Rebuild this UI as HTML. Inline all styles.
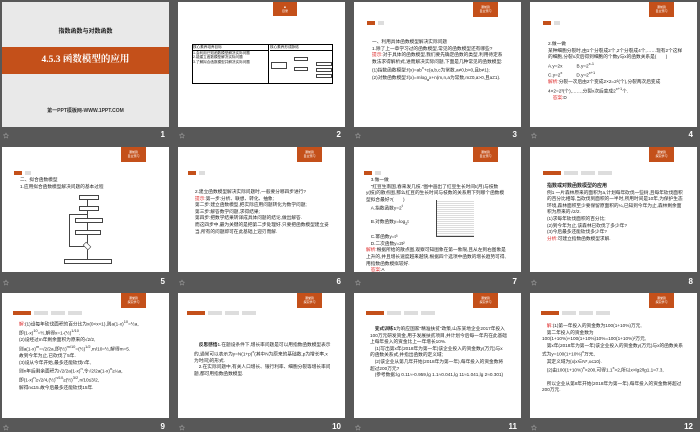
<!DOCTYPE html>
<html><head><meta charset="utf-8"><style>
*{margin:0;padding:0;box-sizing:border-box}
body{width:700px;height:431px;background:#585858;position:relative;overflow:hidden;font-family:"Liberation Sans","Noto Sans CJK SC",sans-serif}
.s{position:absolute;width:167px;height:125px;background:#fff;overflow:hidden;color:#222;font-size:4.7px;line-height:6.6px}
.tab{position:absolute;left:119px;top:0;width:25px;height:15px;background:#c4501a;color:#fff;font-size:3px;line-height:4px;text-align:center;padding-top:3px}
.nav{position:absolute;left:13px;top:24px;height:4px;display:flex;gap:3px}
.nav i{display:block;height:4px;width:14px;background:#ddd}
.nav i:first-child{background:#c4501a;width:18px}
.nav2 i{width:6px}.nav2 i:first-child{width:8px}
.t{position:absolute;left:18px;right:14px}
.r{color:#d22}
.lb{position:absolute;color:#ddd;font-size:6px}
.n{position:absolute;color:#fff;font-size:8px;font-weight:bold;width:20px;text-align:right}
.b{position:absolute;border:1px solid #444}
</style></head><body>

<!-- row 1 -->
<div class="s" style="left:2px;top:2px;background:#e9e9e9">
 <div style="position:absolute;top:27px;width:100%;text-align:center;font-size:6px;font-weight:bold;color:#222">指数函数与对数函数</div>
 <div style="position:absolute;top:45px;width:100%;height:27px;background:#c4501a;color:#fff;text-align:center;font-size:9.5px;font-weight:bold;line-height:27px;font-family:'Liberation Serif','Noto Serif CJK SC',serif">4.5.3 函数模型的应用</div>
 <div style="position:absolute;top:106px;width:100%;text-align:center;font-size:5px;font-weight:bold;color:#333">第一PPT模板网-WWW.1PPT.COM</div>
</div>
<div class="s" style="left:178px;top:2px">
 <div class="tab" style="left:95px;width:24px;height:14px">■<br>目录</div>
 <div style="position:absolute;left:14px;top:42px;width:141px;height:40px;border:1px solid #000;font-size:3.6px;line-height:4.6px">
  <div style="position:absolute;left:0;top:0;width:76px;height:38px;border-right:1px solid #000"><div style="border-bottom:1px solid #000">核心素养培养目标</div>1.会利用已知函数模型解决实际问题<br>2.能建立函数模型解决实际问题<br>3.了解拟合函数模型并解决实际问题</div>
  <div style="position:absolute;left:77px;top:0;right:0;border-bottom:1px solid #000">核心素养形成脉络</div>
  <div class="b" style="left:78px;top:17px;width:16px;height:7px"></div>
  <div class="b" style="left:101px;top:12px;width:14px;height:4px"></div>
  <div class="b" style="left:101px;top:22px;width:14px;height:4px"></div>
  <div class="b" style="left:123px;top:17px;width:16px;height:4px"></div>
  <div class="b" style="left:123px;top:23px;width:16px;height:4px"></div>
  <div class="b" style="left:123px;top:29px;width:16px;height:4px"></div>
 </div>
</div>
<div class="s" style="left:354px;top:2px">
 <div class="tab">课前篇<br>自主预习</div>
 <div class="nav nav2" style="top:19px"><i></i><i></i></div>
 <div class="t" style="top:37px">一、利用具体函数模型解决实际问题<br>1.除了上一章学习过的函数模型,常见的函数模型还有哪些?<br><span class="r">提示:</span>对于具体的函数模型,我们要先确定函数的类型,利用待定系数法求得解析式,进而解决实际问题,下面是几种常见的函数模型:<br>(1)指数函数模型:f(x)=ab<sup>x</sup>+c(a,b,c为常数,a≠0,b&gt;0,且b≠1);<br>(2)对数函数模型:f(x)=mlog<sub>a</sub>x+n(m,n,a为常数,m≠0,a&gt;0,且a≠1).</div>
</div>
<div class="s" style="left:530px;top:2px">
 <div class="tab">课前篇<br>自主预习</div>
 <div class="nav nav2" style="top:19px"><i></i><i></i></div>
 <div class="t" style="top:39px">2.做一做<br>某种细胞分裂时,由1个分裂成2个,2个分裂成4个,……现有2个这样的细胞,分裂x次后得到细胞的个数y与x的函数关系是(　　)<br>A.y=2x　　　B.y=2<sup>x-1</sup><br>C.y=2<sup>x</sup>　　　D.y=2<sup>x+1</sup><br><span class="r">解析:</span>分裂一次后由2个变成2×2=2²(个),分裂两次后变成4×2=2³(个),……,分裂x次后变成2<sup>x+1</sup>个.<br>　<span class="r">答案:</span>D</div>
</div>

<!-- row 2 -->
<div class="s" style="left:2px;top:147px">
 <div class="tab">课前篇<br>自主预习</div>
 <div class="nav nav2" style="left:12px"><i></i><i></i></div>
 <div class="t" style="top:30px">二、拟合函数模型<br>1.应用拟合函数模型解决问题的基本过程</div>
 <div style="position:absolute;left:85px;top:53px;width:1px;height:60px;background:#444"></div>
 <div class="b" style="left:77px;top:48px;width:20px;height:5px;background:#fff"></div>
 <div class="b" style="left:77px;top:59px;width:20px;height:5px;background:#fff"></div>
 <div class="b" style="left:73px;top:71px;width:28px;height:5px;background:#fff"></div>
 <div class="b" style="left:73px;top:83px;width:26px;height:5px;background:#fff"></div>
 <div class="b" style="left:67px;top:67px;width:18px;height:33px;border-right:none"></div>
 <div class="b" style="left:79px;top:95px;width:12px;height:8px;transform:rotate(45deg) scale(.6);background:#fff"></div>
 <div class="b" style="left:62px;top:112px;width:48px;height:5px;background:#fff"></div>
</div>
<div class="s" style="left:178px;top:147px">
 <div class="tab">课前篇<br>自主预习</div>
 <div class="nav nav2" style="left:10px"><i></i><i></i></div>
 <div class="t" style="top:42px;left:17px">2.建立函数模型解决实际问题时,一般要分哪四步进行?<br><span class="r">提示:</span>第一步:分析、联想、转化、抽象;<br>第二步:建立函数模型,把实际应用问题转化为数学问题;<br>第三步:解答数学问题,求得结果;<br>第四步:把数学结果转译成具体问题的结论,做出解答.<br>而这四步中,最为关键的是把第二步处理好.只要把函数模型建立妥当,所有的问题即可在此基础上迎刃而解.</div>
</div>
<div class="s" style="left:354px;top:147px">
 <div class="tab">课前篇<br>自主预习</div>
 <div class="nav nav2" style="left:10px"><i></i><i></i></div>
 <div class="t" style="top:30px;left:12px">　3.做一做<br>　"红豆生南国,春来发几枝."图中画出了红豆生长时间t(月)与枝数y(枝)的散点图,那么红豆的生长时间与枝数的关系用下列哪个函数模型拟合最好?(　　)<br>　A.指数函数y=2<sup>t</sup><br><br>　B.对数函数y=log<sub>2</sub>t<br><br>　C.幂函数y=t³<br>　D.二次函数y=2t²<br><span class="r">解析:</span>根据所给的散点图,观察可知图象在第一象限,且从左到右图象是上升的,并且增长速度越来越快,根据四个选项中函数的增长趋势可得,用指数函数模拟较好.<br>　<span class="r">答案:</span>A</div>
 <div style="position:absolute;left:82px;top:53px;width:38px;height:37px;background:repeating-linear-gradient(#fff 0 1.5px,#bbb 1.5px 2px);border-left:1px solid #444;border-bottom:1px solid #444"></div>
</div>
<div class="s" style="left:530px;top:147px">
 <div class="tab">课堂篇<br>探究学习</div>
 <div class="nav"><i></i><i></i><i></i><i></i></div>
 <div class="t" style="top:36px;left:17px"><b style="font-size:5px">指数或对数函数模型的应用</b><br>例1 一片森林原来的面积为a,计划每年砍伐一些树,且每年砍伐面积的百分比相等,当砍伐到面积的一半时,所用时间是10年,为保护生态环境,森林面积至少要保留原面积的¼,已知到今年为止,森林剩余面积为原来的√2/2.<br>(1)求每年砍伐面积的百分比;<br>(2)到今年为止,该森林已砍伐了多少年?<br>(3)今后最多还能砍伐多少年?<br><span class="r">分析:</span>可建立指数函数模型求解.</div>
</div>

<!-- row 3 -->
<div class="s" style="left:2px;top:293px">
 <div class="tab">课堂篇<br>探究学习</div>
 <div class="nav" style="left:11px;top:18px"><i></i><i></i><i></i><i></i></div>
 <div class="t" style="top:26px;left:17px"><span class="r">解:</span>(1)设每年砍伐面积的百分比为x(0&lt;x&lt;1),则a(1-x)<sup>10</sup>=½a,<br>即(1-x)<sup>10</sup>=½,解得x=1-(½)<sup>1/10</sup>.<br>(2)设经过m年剩余面积为原来的√2/2,<br>则a(1-x)<sup>m</sup>=√2/2a,即(½)<sup>m/10</sup>=(½)<sup>1/2</sup>,m/10=½,解得m=5.<br>故到今年为止,已砍伐了5年.<br>(3)设从今年开始,最多还能砍伐n年,<br>则n年后剩余面积为√2/2a(1-x)<sup>n</sup>,令√2/2a(1-x)<sup>n</sup>≥¼a,<br>即(1-x)<sup>n</sup>≥√2/4,(½)<sup>n/10</sup>≥(½)<sup>3/2</sup>,n/10≤3/2,<br>解得n≤15.故今后最多还能砍伐15年.</div>
</div>
<div class="s" style="left:178px;top:293px">
 <div class="tab">课堂篇<br>探究学习</div>
 <div class="nav" style="left:9px;top:18px"><i></i><i></i><i></i><i></i></div>
 <div class="t" style="top:49px;left:16px"><b>　反思感悟</b>1.在题设条件下,增长率问题是可以用指数函数模型表示的,通常可以表示为y=N(1+p)<sup>x</sup>(其中N为原来的基础数,p为增长率,x为时间)的形式.<br>　2.在实际问题中,有关人口增长、银行利率、细胞分裂等增长率问题,都可用指数函数模型.</div>
</div>
<div class="s" style="left:354px;top:293px">
 <div class="tab">课堂篇<br>探究学习</div>
 <div class="nav" style="left:12px;top:18px"><i></i><i></i><i></i><i></i></div>
 <div class="t" style="top:33px;left:16px"><b>　变式训练1</b>为响应国家"精准扶贫"政策,山东某地企业2017年投入100万元研发资金,用于发展扶贫项目,并计划今后每一年内在此基础上每年投入的资金比上一年增长10%.<br>　(1)写出第x年(2018年为第一年)该企业投入的资金数y(万元)与x的函数关系式,并指出函数的定义域;<br>　(2)该企业从第几年开始(2018年为第一年),每年投入的资金数将超过200万元?<br>　(参考数据:lg 0.11≈-0.959,lg 1.1≈0.041,lg 11≈1.041,lg 2≈0.301)</div>
</div>
<div class="s" style="left:530px;top:293px">
 <div class="tab">课堂篇<br>探究学习</div>
 <div class="nav" style="left:11px;top:18px"><i></i><i></i><i></i><i></i></div>
 <div class="t" style="top:30px;left:12px">　<span class="r">解:</span>(1)第一年投入的资金数为100(1+10%)万元,<br>　第二年投入的资金数为<br>100(1+10%)+100(1+10%)10%=100(1+10%)²万元,<br>　第x年(2018年为第一年)该企业投入的资金数y(万元)与x的函数关系式为y=100(1+10%)<sup>x</sup>万元,<br>　其定义域为{x|x∈N*,x≤10}.<br>　(2)由100(1+10%)<sup>x</sup>&gt;200,可得1.1<sup>x</sup>&gt;2,所以x&gt;lg2/lg1.1≈7.3,<br><br>　所以企业从第8年开始(2018年为第一年),每年投入的资金数将超过200万元.</div>
</div>

<!-- labels -->
<div class="lb" style="left:3px;top:131px">☆</div><div class="n" style="left:145px;top:130px">1</div>
<div class="lb" style="left:179px;top:131px">☆</div><div class="n" style="left:321px;top:130px">2</div>
<div class="lb" style="left:355px;top:131px">☆</div><div class="n" style="left:497px;top:130px">3</div>
<div class="lb" style="left:531px;top:131px">☆</div><div class="n" style="left:673px;top:130px">4</div>
<div class="lb" style="left:3px;top:278px">☆</div><div class="n" style="left:145px;top:277px">5</div>
<div class="lb" style="left:179px;top:278px">☆</div><div class="n" style="left:321px;top:277px">6</div>
<div class="lb" style="left:355px;top:278px">☆</div><div class="n" style="left:497px;top:277px">7</div>
<div class="lb" style="left:531px;top:278px">☆</div><div class="n" style="left:673px;top:277px">8</div>
<div class="lb" style="left:3px;top:423px">☆</div><div class="n" style="left:145px;top:422px">9</div>
<div class="lb" style="left:179px;top:423px">☆</div><div class="n" style="left:321px;top:422px">10</div>
<div class="lb" style="left:355px;top:423px">☆</div><div class="n" style="left:497px;top:422px">11</div>
<div class="lb" style="left:531px;top:423px">☆</div><div class="n" style="left:673px;top:422px">12</div>
</body></html>
